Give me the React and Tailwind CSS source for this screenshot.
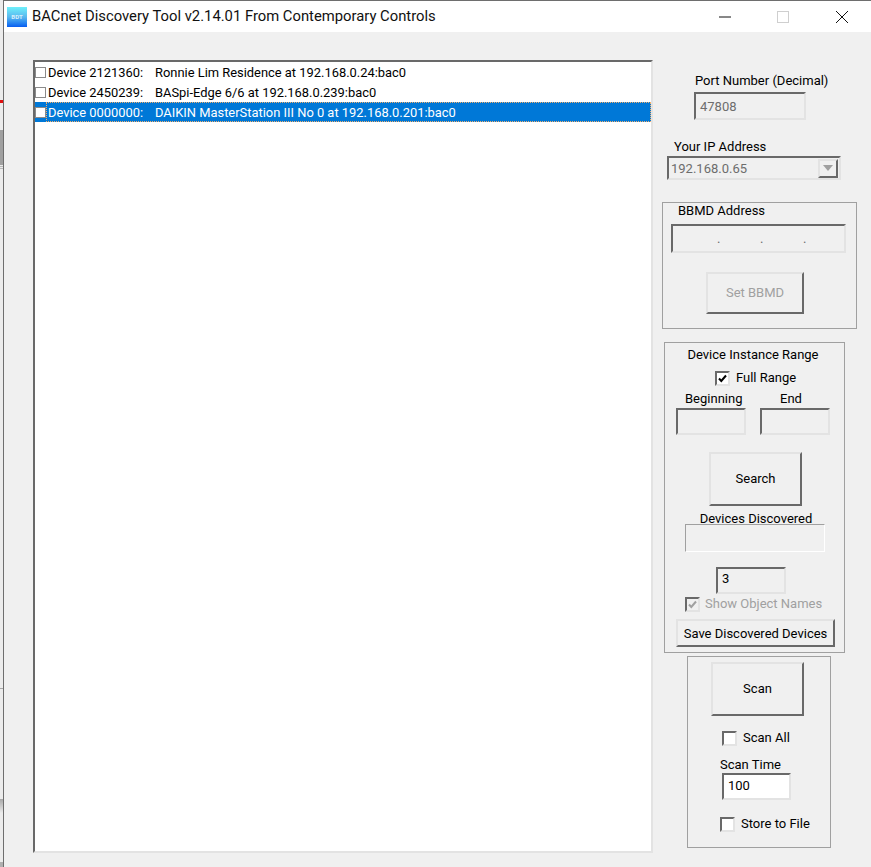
import React from 'react';

const devices = [
  { id: 'Device 2121360:', name: 'Ronnie Lim Residence at 192.168.0.24:bac0' },
  { id: 'Device 2450239:', name: 'BASpi-Edge 6/6 at 192.168.0.239:bac0' },
  { id: 'Device 0000000:', name: 'DAIKIN MasterStation III No 0 at 192.168.0.201:bac0', selected: true },
];

const Field = ({ className = '', children }) => (
  <div className={`border-2 border-t-[#696969] border-l-[#696969] border-r-[#e3e3e3] border-b-[#e3e3e3] text-[13px] leading-none ${className}`}>
    {children}
  </div>
);

const Btn = ({ className = '', children }) => (
  <div className={`flex items-center justify-center border-2 border-t-[#e3e3e3] border-l-[#e3e3e3] border-r-[#696969] border-b-[#696969] bg-[#f0f0f0] text-[13px] ${className}`}>
    {children}
  </div>
);

const Check = ({ checked, disabled, className = '' }) => (
  <div
    className={`w-[15px] h-[15px] shrink-0 flex items-center justify-center border-2 border-t-[#696969] border-l-[#696969] border-r-[#e3e3e3] border-b-[#e3e3e3] ${
      disabled ? 'bg-[#f0f0f0]' : 'bg-white'
    } ${className}`}
  >
    {checked && (
      <svg width="9" height="9" viewBox="0 0 9 9" fill="none">
        <path d="M1 4.5 L3.3 7 L8 1.5" stroke={disabled ? '#a0a0a0' : '#000'} strokeWidth="2" />
      </svg>
    )}
  </div>
);

const App = () => (
  <div className="w-[871px] h-[867px] flex bg-[#d8d8d8] overflow-hidden text-[#000] whitespace-nowrap [font-family:Roboto,sans-serif]">
    {/* sliver of whatever sits behind the window */}
    <div className="w-[3px] shrink-0 flex flex-col bg-[#ececec]">
      <div className="h-[3px] mt-[100px] bg-[#e01010]" />
      <div className="h-[35px] mt-[27px] bg-[#a0a0a0]" />
      <div className="h-px mt-px bg-[#b8b8b8]" />
      <div className="h-px mt-px bg-[#b8b8b8]" />
      <div className="h-px mt-[519px] bg-[#a8a8a8]" />
      <div className="h-[14px] mt-[110px] bg-gradient-to-b from-[#a8a8a8] to-[#ececec]" />
      <div className="h-[5px] mt-[49px] bg-[#b0b0b0]" />
    </div>
    <div className="flex-1 flex flex-col border-l border-t border-[#6e6e6e] bg-[#f0f0f0]">
      <div className="h-[31px] shrink-0 bg-white flex items-center pl-[3px]">
        <div className="w-[20px] h-[20px] bg-gradient-to-b from-[#6ef0fa] via-[#5ab8ee] to-[#0a5cf0] flex items-center justify-center text-[6px] font-bold text-[#d5eefc]">
          BDT
        </div>
        <span className="ml-[5px] text-[14.8px] text-[#111]">BACnet Discovery Tool v2.14.01 From Contemporary Controls</span>
        <div className="ml-auto flex items-center">
          <svg width="12" height="12" viewBox="0 0 12 12" className="mr-[46px]">
            <path d="M0 6 H12" stroke="#111" strokeWidth="1" />
          </svg>
          <div className="w-[12px] h-[12px] border border-[#cfcfcf] mr-[47px]" />
          <svg width="12" height="12" viewBox="0 0 12 12" className="mr-[23px]">
            <path d="M0 0 L12 12 M12 0 L0 12" stroke="#111" strokeWidth="1" />
          </svg>
        </div>
      </div>

      <div className="flex-1 flex">
        <div className="w-[620px] h-[793px] mt-[28px] ml-[29px] shrink-0 bg-white border-2 border-t-[#696969] border-l-[#696969] border-r-[#e3e3e3] border-b-[#e3e3e3]">
          {devices.map(d => (
            <div
              key={d.id}
              className={`h-[20px] flex items-center text-[12.9px] ${d.selected ? 'bg-[#0078d7] text-white' : ''}`}
            >
              <div className="w-[11px] h-[11px] shrink-0 border border-[#8a8a8a] bg-white" />
              <div
                className={`flex-1 h-[20px] flex items-center pt-[2px] pl-px border border-dotted ${
                  d.selected ? 'border-[#f0b070]' : 'border-transparent'
                }`}
              >
                <span className="w-[107px]">{d.id}</span>
                <span>{d.name}</span>
              </div>
            </div>
          ))}
        </div>

        <div className="flex-1 flex flex-col pt-[41px]">
          <div className="ml-[42px] text-[13px] leading-[16px]">Port Number (Decimal)</div>
          <Field className="ml-[41px] mt-[3px] w-[112px] h-[28px] flex items-center pl-[4px] text-[#6d6d6d]">47808</Field>

          <div className="ml-[21px] mt-[19px] text-[13px] leading-[16px]">Your IP Address</div>
          <Field className="ml-[14px] mt-[1px] w-[174px] h-[24px] flex items-center pl-[2px] pr-px text-[#6d6d6d]">
            <span>192.168.0.65</span>
            <Btn className="ml-auto w-[20px] h-[19px]">
              <svg width="10" height="6" viewBox="0 0 10 6">
                <path d="M0 0 H10 L5 6 Z" fill="#a0a0a0" />
              </svg>
            </Btn>
          </Field>

          <div className="ml-[9px] mt-[22px] w-[195px] h-[127px] border border-[#a0a0a0] flex flex-col">
            <div className="ml-[15px] text-[13px] leading-[16px]">BBMD Address</div>
            <Field className="ml-[8px] mt-[5px] w-[175px] h-[29px] flex items-center pl-[44px] gap-[39.5px] text-[#6d6d6d]">
              <span>.</span>
              <span>.</span>
              <span>.</span>
            </Field>
            <Btn className="ml-[43px] mt-[19px] w-[98px] h-[42px] text-[#a0a0a0]">Set BBMD</Btn>
          </div>

          <div className="ml-[11px] mt-[13px] w-[181px] h-[311px] border border-[#a0a0a0] flex flex-col">
            <div className="text-center text-[13px] leading-[16px] mt-[4px] pr-[3px]">Device Instance Range</div>
            <div className="flex items-center ml-[50px] mt-[7px] text-[13px] leading-[16px]">
              <Check checked />
              <span className="ml-[6px]">Full Range</span>
            </div>
            <div className="flex mt-[5px] text-[13px] leading-[16px]">
              <span className="ml-[20px] w-[95px]">Beginning</span>
              <span>End</span>
            </div>
            <div className="flex mt-[1px] ml-[11px] gap-[14px]">
              <Field className="w-[70px] h-[27px]" />
              <Field className="w-[70px] h-[27px]" />
            </div>
            <Btn className="ml-[44px] mt-[17px] w-[93px] h-[54px]">Search</Btn>
            <div className="text-center text-[13px] leading-[16px] mt-[5px] pl-[3px]">Devices Discovered</div>
            <div className="ml-[20px] mt-[-3px] w-[140px] h-[28px] border border-t-[#a0a0a0] border-l-[#a0a0a0] border-r-[#fff] border-b-[#fff]" />
            <Field className="ml-[51px] mt-[15px] w-[70px] h-[27px] flex items-center pl-[4px] pb-[4px]">3</Field>
            <div className="flex items-center ml-[20px] mt-[2px] text-[13px] leading-[16px] text-[#a0a0a0]">
              <Check checked disabled />
              <span className="ml-[5px]">Show Object Names</span>
            </div>
            <Btn className="ml-[11px] mt-[7px] w-[159px] h-[28px] pt-px">Save Discovered Devices</Btn>
          </div>

          <div className="ml-[34px] mt-[3px] w-[144px] h-[192px] border border-[#a0a0a0] flex flex-col">
            <Btn className="ml-[23px] mt-[5px] w-[93px] h-[54px]">Scan</Btn>
            <div className="flex items-center ml-[34px] mt-[14px] text-[13px] leading-[16px]">
              <Check />
              <span className="ml-[6px]">Scan All</span>
            </div>
            <div className="ml-[32px] mt-[11px] text-[13px] leading-[16px]">Scan Time</div>
            <Field className="ml-[34px] mt-0 w-[69px] h-[27px] flex items-center pl-[4px] pb-[2px] bg-white">100</Field>
            <div className="flex items-center ml-[32px] mt-[16px] text-[13px] leading-[16px]">
              <Check />
              <span className="ml-[6px]">Store to File</span>
            </div>
          </div>
        </div>
      </div>
    </div>
  </div>
);

export default App;
